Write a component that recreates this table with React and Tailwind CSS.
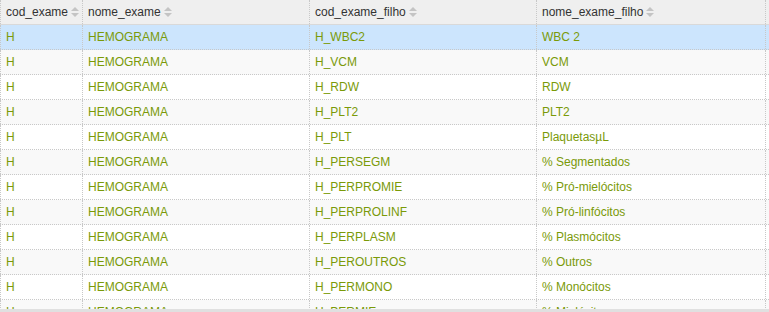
import React from 'react';

const rows = [
    ['H', 'HEMOGRAMA', 'H_WBC2', 'WBC 2'],
    ['H', 'HEMOGRAMA', 'H_VCM', 'VCM'],
    ['H', 'HEMOGRAMA', 'H_RDW', 'RDW'],
    ['H', 'HEMOGRAMA', 'H_PLT2', 'PLT2'],
    ['H', 'HEMOGRAMA', 'H_PLT', 'PlaquetasµL'],
    ['H', 'HEMOGRAMA', 'H_PERSEGM', '% Segmentados'],
    ['H', 'HEMOGRAMA', 'H_PERPROMIE', '% Pró-mielócitos'],
    ['H', 'HEMOGRAMA', 'H_PERPROLINF', '% Pró-linfócitos'],
    ['H', 'HEMOGRAMA', 'H_PERPLASM', '% Plasmócitos'],
    ['H', 'HEMOGRAMA', 'H_PEROUTROS', '% Outros'],
    ['H', 'HEMOGRAMA', 'H_PERMONO', '% Monócitos'],
    ['H', 'HEMOGRAMA', 'H_PERMIE', '% Mielócitos'],
];

const columns = ['cod_exame', 'nome_exame', 'cod_exame_filho', 'nome_exame_filho'];
const widths = ['w-[83px] border-l', 'w-[227px]', 'w-[227px]', 'w-[229px]'];

function SortIcon() {
    return (
        <svg width="8" height="10" viewBox="0 0 8 10" className="ml-[3px] shrink-0">
            <polygon points="0,4 4,0 8,4" fill="#c4c4c4" />
            <polygon points="0,6 4,10 8,6" fill="#c4c4c4" />
        </svg>
    );
}

export default function App() {
    return (
        <div className="w-[769px] h-[312px] bg-white flex flex-col text-[12px]" style={{ fontFamily: '"Liberation Sans", Arial, sans-serif' }}>
            <div className="h-[309px] overflow-hidden">
                <div className="flex h-[25px] bg-[#efefef] border-b border-[#d9d9d9]">
                    {columns.map((c, i) => (
                        <div key={c} className={`${widths[i]} flex items-center px-[5px] border-r border-dotted border-[#c8c8c8] text-[#333]`}>
                            <span>{c}</span>
                            <SortIcon />
                        </div>
                    ))}
                </div>
                {rows.map((r, idx) => (
                    <div
                        key={idx}
                        className={`flex h-[25px] border-b border-dotted border-[#c8c8c8] ${idx === 0 ? 'bg-[#cce5fd]' : idx % 2 ? 'bg-[#f9f9f9]' : 'bg-white'}`}
                    >
                        {r.map((v, i) => (
                            <div key={i} className={`${widths[i]} flex items-center px-[5px] border-r border-dotted border-[#c8c8c8] text-[#7a9a08] whitespace-nowrap`}>
                                {v}
                            </div>
                        ))}
                    </div>
                ))}
            </div>
            <div className="flex-1 bg-[#e0e0e0]"></div>
        </div>
    );
}
